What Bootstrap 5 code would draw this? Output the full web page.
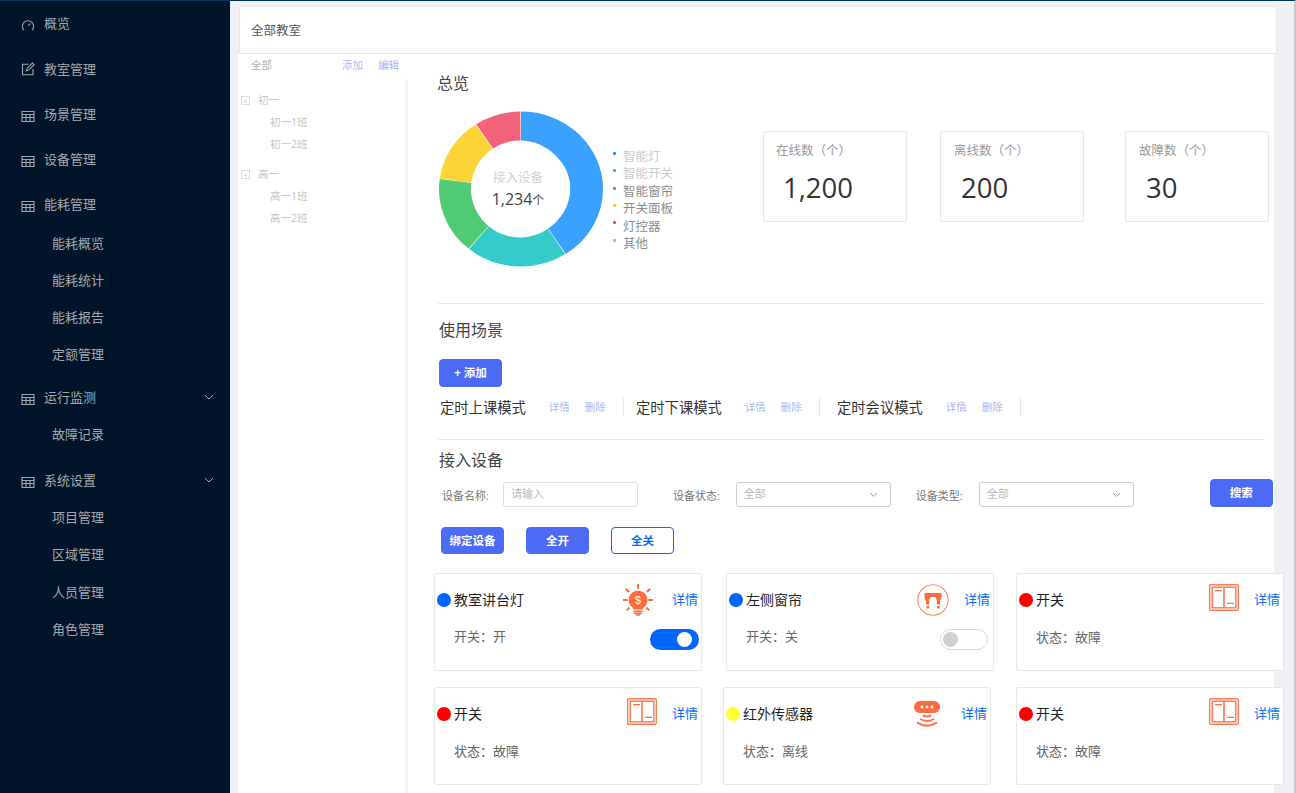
<!DOCTYPE html>
<html lang="zh">
<head>
<meta charset="utf-8">
<title>全部教室</title>
<link href="https://cdn.jsdelivr.net/npm/bootstrap@5.3.0/dist/css/bootstrap.min.css" rel="stylesheet">
<style>
html,body{height:793px;overflow:hidden}
body{font-family:"Open Sans","Noto Sans CJK SC",sans-serif;background:#eff0f6;color:#333;font-size:14px}
.shell{height:793px;width:1296px;border-top:1px solid #00305c;border-right:2px solid #c9c9cc}
.side{width:230px;background:#001529;color:#a5a9ae;flex:none;height:792px}
.side-item{height:45px;padding-left:21px;font-size:13px;line-height:20px}
.side-item svg{width:14px;height:14px;margin-right:9px;flex:none;margin-top:4px}
.side-item .lbl{flex:1}
.side-item .caret{margin:0 15px 0 0;width:12px;height:12px}
.side-top{padding-bottom:2px}
.side-top svg{margin-top:5px}
.side-item svg.ic-plain{margin-top:1px}
.sub-item{height:37px;padding-left:52px;font-size:13px;padding-bottom:2px}
.s-b{height:45px}
.s-d{height:38px;padding-bottom:6px}
.s-e{padding-bottom:6px}
.s-f{padding-bottom:4px}
.workspace{width:1044px;padding:5px 0 0 8px}
.head-box{height:48px;width:1038px;margin-left:1px;background:#fff;border:1px solid #e8e8e8;padding-left:11px;font-size:12.5px;line-height:47px;color:#555;position:relative;z-index:1}
.pane{background:#fff;width:1036px;height:740px}
.tree{width:170px;flex:none;font-size:10.5px;color:#c4c4c4;position:relative}
.tree-top{height:25px;padding:4px 0 0 13px;color:#b0b0b0}
.tree-all{width:91px}
.tree-add{width:36px}
.tree-link{color:#aab6f8}
.tree-body{height:715px}
.tree-rail{width:3px;background:#f5f5f6}
.tree-list{padding-top:10px;width:167px}
.node{height:22px;padding-left:20px;line-height:22px}
.node-box{width:9px;height:9px;border:1px solid #ddd;margin:0 8px 0 -17px;color:#ccc;font-size:8px;line-height:7px;text-align:center;flex:none}
.leaf{height:22px;padding-left:32px;line-height:22px}
.gap-node{height:8px}
.body-col{flex:1;padding-left:29px;min-width:0;position:relative}
.heading{font-size:16px;line-height:20px;color:#444}
.h-one{padding-top:19px}
.donut-row{height:210px}
.donut-wrap{width:164px;height:160px;flex:none;position:relative;margin:17px 0 0 2px}
.donut-mid{position:absolute;left:-3px;top:58px;width:164px;text-align:center}
.donut-t{font-size:12.5px;color:#d0d0d0;line-height:20px}
.donut-n{font-size:16px;color:#444;line-height:20px;margin-top:1px}
.donut-n small{font-size:12px}
.legend{margin:55px 0 0 10px;font-size:12.5px;color:#8c8c8c;line-height:17.4px;list-style:none;padding:0;width:150px;flex:none}
.legend li{display:flex;align-items:center}
.legend i{width:3px;height:3px;border-radius:1px;margin-right:7px;margin-top:-7px}
.legend .pale{color:#cacaca}
.bg-lg-1{background:#1890ff}.bg-lg-2{background:#13c2c2}.bg-lg-3{background:#2fc25b}.bg-lg-4{background:#facc14}.bg-lg-5{background:#f04864}.bg-lg-6{background:#cf9cf5}
.stat{width:144px;height:91px;border:1px solid #e8e8e8;border-radius:2px;padding:10px 12px;flex:none}
.stat-t{font-size:12.5px;color:#999;line-height:18px;white-space:nowrap}
.stat-n{font-size:27.5px;line-height:37px;margin:9px 0 0 7px;color:#333}
.stats{padding-top:38px}
.st2{margin-left:33px;padding-left:13px}.st3{margin-left:41px;padding-left:13px}
.rule{height:1px;background:#e8e8e8;width:827px;margin:0 0 0 1px}
.sec2{padding-left:2px;margin-top:16px}
.btn-main{background:#4b6bf6;border:1px solid #4b6bf6;color:#fff;border-radius:4px;font-size:11.5px;font-weight:700;padding:0;line-height:26px}
.btn-main:hover{background:#4b6bf6;border-color:#4b6bf6;color:#fff}
.b-add{width:63px;height:28px;display:block;margin:19px 0 0 2px}
.scene-row{height:41px;margin:11px 0 0 3px}
.scene{font-size:14.3px;color:#333;line-height:16px;padding-top:2px;white-space:nowrap}
.act{font-size:10.5px;color:#aab6f8;margin-top:2px;white-space:nowrap}
.sc-1{width:184px}.sc-2{width:196px;padding-left:12px}.sc-3{width:201px;padding-left:17px}
.sc-cell{border-right:1px solid #e8e8e8;height:18px}
.sc-cell .act{margin-left:23px}
.sc-cell .act+.act{margin-left:15px}
.sec3{margin-top:10px;padding-left:2px}
.filters{height:28px;margin-top:10px;font-size:11px;color:#777}
.f-lbl{flex:none;margin-top:4px}
.fl-1{margin-left:5px}.fl-2{margin-left:35px}.fl-3{margin-left:25px}
.fld{height:25px;border:1px solid #ccc;border-radius:3px;font-size:11px;color:#bbb;padding:1px 7px;line-height:19px;position:relative;background:#fff}
.fld svg{position:absolute;right:12px;top:9px;width:9px;height:6px}
.fld-a{width:135px;border-color:#ddd;margin-left:14px}
.fld-b{width:155px;margin-left:16px}
.btn-search{width:63px;height:28px;margin-left:76px;margin-top:-3px;line-height:26px}
.tools{margin-top:19px;padding-left:4px}
.tools .btn{height:27px;line-height:25px;width:63px;flex:none}
.tools .btn+.btn{margin-left:22px}
.btn-line{background:#fff;border:1px solid #0a6ae8;color:#0a6ae8;border-radius:4px;font-size:11.5px;font-weight:700;padding:0}
.dev{width:268px;height:98px;border:1px solid #e8e8e8;border-radius:2px;background:#fff;flex:none;position:relative;padding:0 3px 0 2px}
.dev-top{height:52px}
.dot{width:14px;height:14px;border-radius:50%;flex:none;margin-right:3px}
.d-blue{background:#0066ff}.d-red{background:#ff0000}.d-yel{background:#ffff33}
.dev-name{font-size:14px;color:#222;flex:1;margin-top:-2px}
.dev-link{font-size:13px;color:#0a6cff;margin-left:15px;text-decoration:none}
.link-a{margin-left:19px}.link-b{margin-left:21px}
.dev-ico{flex:none}
.ico-sw{margin-top:-6px}
.dev-sub{padding-left:17px;font-size:13px;color:#666;margin-top:1px}
.sub-plain{margin-top:2px}
.sub-txt{margin-top:-4px}
.tog{width:49px;height:21px;border-radius:11px;flex:none;margin:2px -1px 0 0;padding:3px 7px}
.tog span{display:block;width:15px;height:15px;border-radius:50%}
.tog-on{background:#0066ff;justify-content:flex-end}
.tog-on span{background:#fff}
.tog-off{width:48px;background:#fff;border:1px solid #d8d8d8;justify-content:flex-start;padding:2px 3px 2px 2px;margin-right:2px}
.tog-off span{background:#d0d0d0}
.rows{margin:19px 0 0 -3px;gap:16px}
.ml-24{margin-left:24px}.ml-22{margin-left:22px}.ml-21{margin-left:21px}.ml-25{margin-left:25px}
</style>
</head>
<body>
<svg width="0" height="0" class="position-absolute">
<defs>
<symbol id="ic-table" viewBox="0 0 14 14"><path d="M1 2.500h12v10H1zM1 5.500h12M1 8.500h12M5 5.500v7M9 5.500v7" fill="none" stroke="currentColor" stroke-width="1.100"/></symbol>
<symbol id="ic-edit" viewBox="0 0 14 14"><path d="M7.500 2.300H1.500v10.500h10.500V7M5.500 8.700l.5-2.300 5.400-5.400 1.700 1.700-5.400 5.400z" fill="none" stroke="currentColor" stroke-width="1.100"/></symbol>
<symbol id="ic-gauge" viewBox="0 0 14 14"><path d="M3 12.200A5.600 5.600 0 1 1 11 12.200M7 7.600l2.400-2" fill="none" stroke="currentColor" stroke-width="1.100"/></symbol>
<symbol id="ic-caret" viewBox="0 0 12 12"><path d="M2 4l4 4 4-4" fill="none" stroke="currentColor" stroke-width="1"/></symbol>
<symbol id="ic-switch" viewBox="0 0 30 27"><g fill="none" stroke="#ff6f42"><rect x=".7" y=".7" width="28.600" height="25.600" rx="1.200" stroke-width="1.400" opacity=".9"/><rect x="3.200" y="3.200" width="23.600" height="20.600" stroke-width="1.300"/><path d="M15 3v21" stroke-width="1.500"/><path d="M6 6.600h7M18 19.400h7" stroke-width="1.400"/></g></symbol>
</defs>
</svg>
<div class="shell d-flex">
  <nav class="side d-flex flex-column">
    <div class="side-item side-top d-flex align-items-center"><svg><use href="#ic-gauge"/></svg><span class="lbl">概览</span></div>
    <div class="side-item d-flex align-items-center"><svg class="ic-plain"><use href="#ic-edit"/></svg><span class="lbl">教室管理</span></div>
    <div class="side-item d-flex align-items-center"><svg><use href="#ic-table"/></svg><span class="lbl">场景管理</span></div>
    <div class="side-item d-flex align-items-center"><svg><use href="#ic-table"/></svg><span class="lbl">设备管理</span></div>
    <div class="side-item d-flex align-items-center"><svg><use href="#ic-table"/></svg><span class="lbl">能耗管理</span></div>
    <div class="sub-item d-flex align-items-center">能耗概览</div>
    <div class="sub-item d-flex align-items-center">能耗统计</div>
    <div class="sub-item d-flex align-items-center">能耗报告</div>
    <div class="sub-item d-flex align-items-center">定额管理</div>
    <div class="side-item s-b d-flex align-items-center"><svg><use href="#ic-table"/></svg><span class="lbl">运行监测</span><svg class="caret"><use href="#ic-caret"/></svg></div>
    <div class="sub-item s-d d-flex align-items-center">故障记录</div>
    <div class="side-item s-b d-flex align-items-center"><svg><use href="#ic-table"/></svg><span class="lbl">系统设置</span><svg class="caret"><use href="#ic-caret"/></svg></div>
    <div class="sub-item s-e d-flex align-items-center">项目管理</div>
    <div class="sub-item s-e d-flex align-items-center">区域管理</div>
    <div class="sub-item s-f d-flex align-items-center">人员管理</div>
    <div class="sub-item s-f d-flex align-items-center">角色管理</div>
  </nav>
  <main class="workspace">
    <div class="head-box">全部教室</div>
    <div class="pane d-flex">
      <aside class="tree">
        <div class="tree-top d-flex"><span class="tree-all">全部</span><span class="tree-link tree-add">添加</span><span class="tree-link">编辑</span></div>
        <div class="d-flex tree-body">
          <div class="tree-list">
            <div class="node d-flex align-items-center"><span class="node-box">+</span>初一</div>
            <div class="leaf">初一1班</div>
            <div class="leaf">初一2班</div>
            <div class="gap-node"></div>
            <div class="node d-flex align-items-center"><span class="node-box">+</span>高一</div>
            <div class="leaf">高一1班</div>
            <div class="leaf">高一2班</div>
          </div>
          <div class="tree-rail"></div>
        </div>
      </aside>
      <section class="body-col">
        <div class="heading h-one">总览</div>
        <div class="d-flex donut-row">
          <div class="donut-wrap">
            <svg width="164" height="160" viewBox="0 0 164 160">
              <g fill="none" stroke-width="31" transform="translate(82 79) scale(1.058 1) rotate(-90)">
                <circle r="62" pathLength="360" stroke="#3ba1ff" stroke-dasharray="146.900 213.100" stroke-dashoffset="0"/>
                <circle r="62" pathLength="360" stroke="#36cbcb" stroke-dasharray="71.900 288.100" stroke-dashoffset="-147.400"/>
                <circle r="62" pathLength="360" stroke="#4ecb73" stroke-dasharray="57.600 302.400" stroke-dashoffset="-219.800"/>
                <circle r="62" pathLength="360" stroke="#fbd437" stroke-dasharray="48.400 311.600" stroke-dashoffset="-277.900"/>
                <circle r="62" pathLength="360" stroke="#f2637b" stroke-dasharray="32.700 327.300" stroke-dashoffset="-326.800"/>
              </g>
              <ellipse cx="81" cy="79" rx="49" ry="48.500" fill="#fff"/>
            </svg>
            <div class="donut-mid"><div class="donut-t">接入设备</div><div class="donut-n">1,234<small>个</small></div></div>
          </div>
          <ul class="legend">
            <li class="pale"><i class="bg-lg-1"></i>智能灯</li>
            <li class="pale"><i class="bg-lg-2"></i>智能开关</li>
            <li><i class="bg-lg-3"></i>智能窗帘</li>
            <li><i class="bg-lg-4"></i>开关面板</li>
            <li><i class="bg-lg-5"></i>灯控器</li>
            <li><i class="bg-lg-6"></i>其他</li>
          </ul>
          <div class="d-flex stats">
            <div class="stat"><div class="stat-t">在线数（个）</div><div class="stat-n">1,200</div></div>
            <div class="stat st2"><div class="stat-t">离线数（个）</div><div class="stat-n">200</div></div>
            <div class="stat st3"><div class="stat-t">故障数（个）</div><div class="stat-n">30</div></div>
          </div>
        </div>
        <div class="rule"></div>
        <div class="heading sec2">使用场景</div>
        <button class="btn btn-main b-add" type="button">+ 添加</button>
        <div class="d-flex scene-row">
          <div class="d-flex sc-1"><div class="sc-cell d-flex w-100"><span class="scene">定时上课模式</span><span class="act">详情</span><span class="act">删除</span></div></div>
          <div class="d-flex sc-2"><div class="sc-cell d-flex w-100"><span class="scene">定时下课模式</span><span class="act">详情</span><span class="act">删除</span></div></div>
          <div class="d-flex sc-3"><div class="sc-cell d-flex w-100"><span class="scene">定时会议模式</span><span class="act">详情</span><span class="act">删除</span></div></div>
        </div>
        <div class="rule"></div>
        <div class="heading sec3">接入设备</div>
        <div class="d-flex align-items-center filters">
          <span class="f-lbl fl-1">设备名称:</span><div class="fld fld-a">请输入</div>
          <span class="f-lbl fl-2">设备状态:</span><div class="fld fld-b">全部<svg viewBox="0 0 9 6"><path d="M1 1l3.500 3.500L8 1" fill="none" stroke="#999"/></svg></div>
          <span class="f-lbl fl-3">设备类型:</span><div class="fld fld-b">全部<svg viewBox="0 0 9 6"><path d="M1 1l3.500 3.500L8 1" fill="none" stroke="#999"/></svg></div>
          <button class="btn btn-main btn-search" type="button">搜索</button>
        </div>
        <div class="d-flex tools">
          <button class="btn btn-main" type="button">绑定设备</button>
          <button class="btn btn-main" type="button">全开</button>
          <button class="btn btn-line" type="button">全关</button>
        </div>
        <div class="d-flex flex-column rows">
          <div class="d-flex">
            <div class="dev">
              <div class="dev-top d-flex align-items-center"><span class="dot d-blue"></span><span class="dev-name">教室讲台灯</span>
                <svg class="dev-ico" width="30" height="32" viewBox="0 0 32 34"><g fill="none" stroke="#ff6a3d" stroke-width="2"><path d="M16 0v5M3 5l3.500 3.500M29 5l-3.500 3.500M0 17h5M27 17h5M4 28l3-3M28 28l-3-3"/></g><path d="M16 7a10 10 0 0 0-5.500 18.300V27h11v-1.700A10 10 0 0 0 16 7z" fill="#ff6a3d"/><path d="M11 29h10M11.500 31h9M13.500 33h5" stroke="#ff6a3d" stroke-width="1.600"/><text x="16" y="21" font-size="12" fill="#fff" text-anchor="middle" font-family="Liberation Sans">$</text></svg>
                <a class="dev-link link-a" href="#">详情</a></div>
              <div class="d-flex align-items-center dev-sub"><span class="flex-grow-1 sub-txt">开关：开</span><span class="tog tog-on d-flex"><span></span></span></div>
            </div>
            <div class="dev ml-24">
              <div class="dev-top d-flex align-items-center"><span class="dot d-blue"></span><span class="dev-name">左侧窗帘</span>
                <svg class="dev-ico" width="32" height="32" viewBox="0 0 32 32"><circle cx="16" cy="16" r="15.200" fill="none" stroke="#ff9070" stroke-width="1.100"/><path d="M7.500 9h17v6l-1.500 1.500v4h-3v-4l-1.500-3.500h-5L12 16.500v4H9v-4L7.500 15z" fill="#ff6a3d"/><path d="M9.500 22h2.500v2.500H9.500zM20 22h2.500v2.500H20z" fill="#ff6a3d"/></svg>
                <a class="dev-link" href="#">详情</a></div>
              <div class="d-flex align-items-center dev-sub"><span class="flex-grow-1 sub-txt">开关：关</span><span class="tog tog-off d-flex"><span></span></span></div>
            </div>
            <div class="dev ml-22">
              <div class="dev-top d-flex align-items-center"><span class="dot d-red"></span><span class="dev-name">开关</span>
                <svg class="dev-ico ico-sw" width="30" height="27"><use href="#ic-switch"/></svg>
                <a class="dev-link" href="#">详情</a></div>
              <div class="d-flex align-items-center dev-sub sub-plain"><span>状态：故障</span></div>
            </div>
          </div>
          <div class="d-flex">
            <div class="dev">
              <div class="dev-top d-flex align-items-center"><span class="dot d-red"></span><span class="dev-name">开关</span>
                <svg class="dev-ico ico-sw" width="30" height="27"><use href="#ic-switch"/></svg>
                <a class="dev-link" href="#">详情</a></div>
              <div class="d-flex align-items-center dev-sub sub-plain"><span>状态：故障</span></div>
            </div>
            <div class="dev ml-21">
              <div class="dev-top d-flex align-items-center"><span class="dot d-yel"></span><span class="dev-name">红外传感器</span>
                <svg class="dev-ico" width="26" height="26" viewBox="0 0 26 26"><rect x="0" y="0" width="26" height="12" rx="6" fill="#ff6a3d"/><circle cx="8" cy="6" r="1.500" fill="#fff"/><circle cx="13" cy="6" r="1.500" fill="#fff"/><circle cx="18" cy="6" r="1.500" fill="#fff"/><g fill="none" stroke="#ff6a3d" stroke-width="2"><path d="M9 14.500q4 2 8 0M6 18q7 4 14 0M3 21.500q10 6.500 20 0"/></g></svg>
                <a class="dev-link link-b" href="#">详情</a></div>
              <div class="d-flex align-items-center dev-sub sub-plain"><span>状态：离线</span></div>
            </div>
            <div class="dev ml-25">
              <div class="dev-top d-flex align-items-center"><span class="dot d-red"></span><span class="dev-name">开关</span>
                <svg class="dev-ico ico-sw" width="30" height="27"><use href="#ic-switch"/></svg>
                <a class="dev-link" href="#">详情</a></div>
              <div class="d-flex align-items-center dev-sub sub-plain"><span>状态：故障</span></div>
            </div>
          </div>
        </div>
      </section>
    </div>
  </main>
</div>
<script src="https://cdn.jsdelivr.net/npm/bootstrap@5.3.0/dist/js/bootstrap.bundle.min.js"></script>
</body>
</html>
